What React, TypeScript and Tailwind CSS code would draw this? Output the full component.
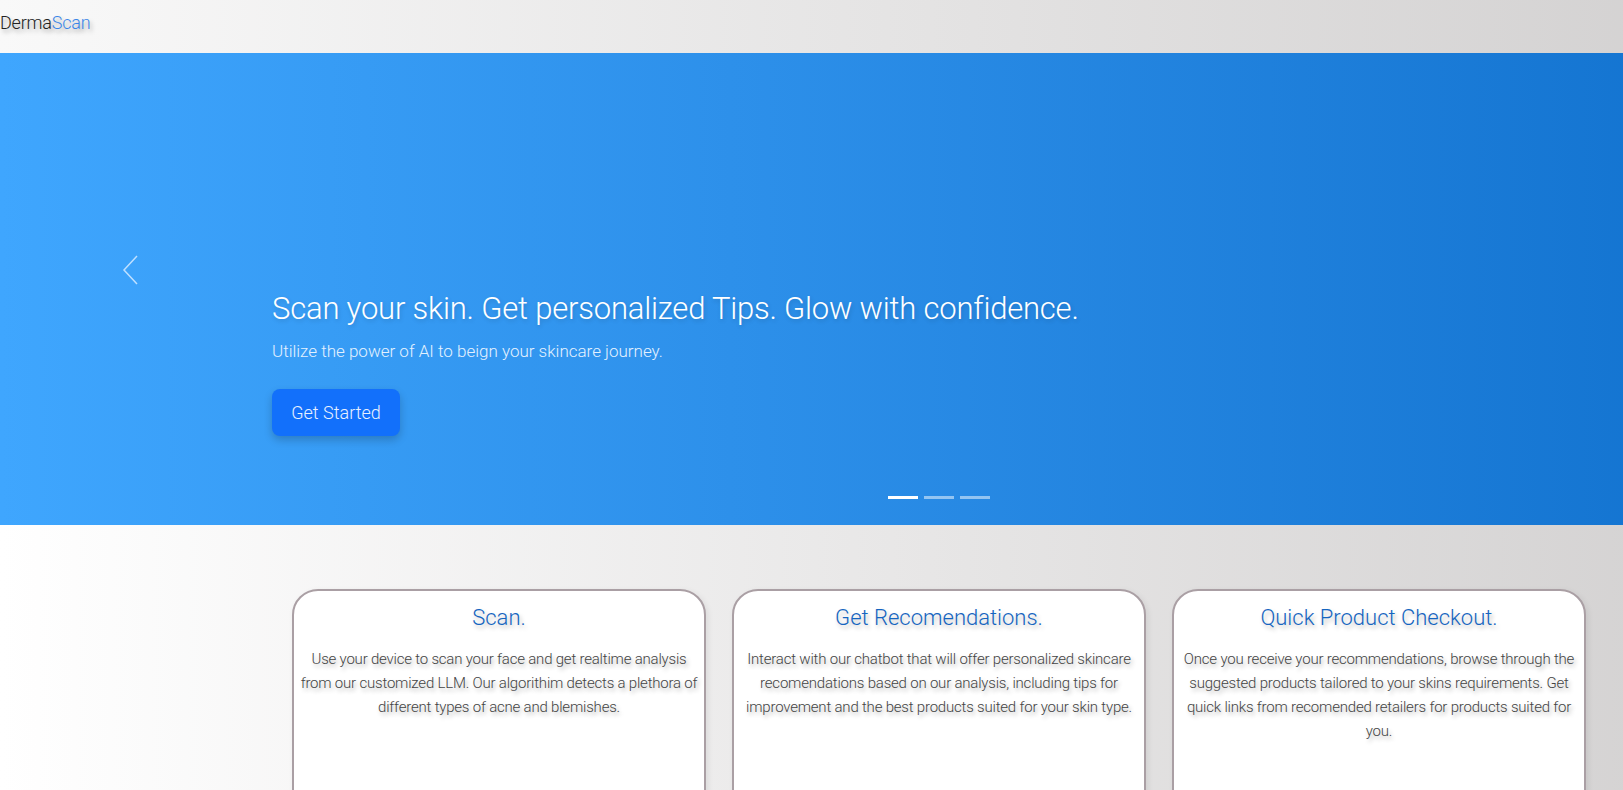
import React from 'react'

const cards = [
  {
    title: 'Scan.',
    body: 'Use your device to scan your face and get realtime analysis from our customized LLM. Our algorithim detects a plethora of different types of acne and blemishes.',
  },
  {
    title: 'Get Recomendations.',
    body: 'Interact with our chatbot that will offer personalized skincare recomendations based on our analysis, including tips for improvement and the best products suited for your skin type.',
  },
  {
    title: 'Quick Product Checkout.',
    body: 'Once you receive your recommendations, browse through the suggested products tailored to your skins requirements. Get quick links from recomended retailers for products suited for you.',
  },
]

export default function App() {
  return (
    <div className="w-full h-[790px] overflow-hidden font-['Roboto',sans-serif] font-light">
      <div className="w-[1878px]">
        {/* Navbar */}
        <nav className="h-[53px] flex items-center bg-gradient-to-r from-[#f9f9f9] to-[#cfcdcd]">
          <a className="text-[18px] leading-none -mt-[7px] tracking-[-0.2px] [text-shadow:2px_3px_4px_rgba(0,0,0,0.35)]">
            <span className="text-[#222]">Derma</span>
            <span className="text-[#3a86e8]">Scan</span>
          </a>
        </nav>

        {/* Hero carousel */}
        <section className="relative h-[472px] bg-gradient-to-r from-[#3fa6fe] to-[#0c6ecb]">
          <button className="absolute left-[121px] top-[200px] w-[20px] h-[34px]">
            <svg viewBox="0 0 20 34" className="w-full h-full" fill="none" stroke="#bfe0ff" strokeWidth="1.5">
              <polyline points="16,3 3,17 16,31" />
            </svg>
          </button>

          <div className="pl-[272px] pt-[236px] text-white">
            <h1 className="text-[31px] leading-[40px] tracking-[-0.2px] [text-shadow:1px_2px_4px_rgba(0,0,0,0.15)]">
              Scan your skin. Get personalized Tips. Glow with confidence.
            </h1>
            <p className="mt-[10px] text-[17px] leading-[24px] text-[#e3f1ff]">
              Utilize the power of AI to beign your skincare journey.
            </p>
            <button className="mt-[26px] w-[128px] h-[47px] rounded-[8px] bg-[#1270fb] text-[18px] text-[#e8f1ff] shadow-[0_4px_8px_rgba(0,0,0,0.2)]">
              Get Started
            </button>
          </div>

          <div className="absolute left-[888px] top-[443px] flex gap-[6px]">
            <span className="block w-[30px] h-[3px] bg-white" />
            <span className="block w-[30px] h-[3px] bg-white/50" />
            <span className="block w-[30px] h-[3px] bg-white/50" />
          </div>
        </section>

        {/* Features */}
        <section className="h-[400px] pt-[64px] bg-gradient-to-r from-[#ffffff] to-[#cfcdcd]">
          <div className="flex justify-center gap-[26px]">
            {cards.map((c) => (
              <div
                key={c.title}
                className="w-[414px] h-[260px] bg-white border-2 border-[#aa9fa4] rounded-[26px] px-[4px] pt-[10px] text-center shadow-[2px_2px_6px_rgba(0,0,0,0.08)]"
              >
                <h2 className="text-[22px] leading-[34px] text-[#1565c0] [text-shadow:2px_3px_4px_rgba(0,0,0,0.25)]">
                  {c.title}
                </h2>
                <p className="mt-[12px] text-[15px] leading-[24px] tracking-[-0.2px] text-[#444] [text-shadow:2px_3px_4px_rgba(0,0,0,0.3)]">
                  {c.body}
                </p>
              </div>
            ))}
          </div>
        </section>
      </div>
    </div>
  )
}
